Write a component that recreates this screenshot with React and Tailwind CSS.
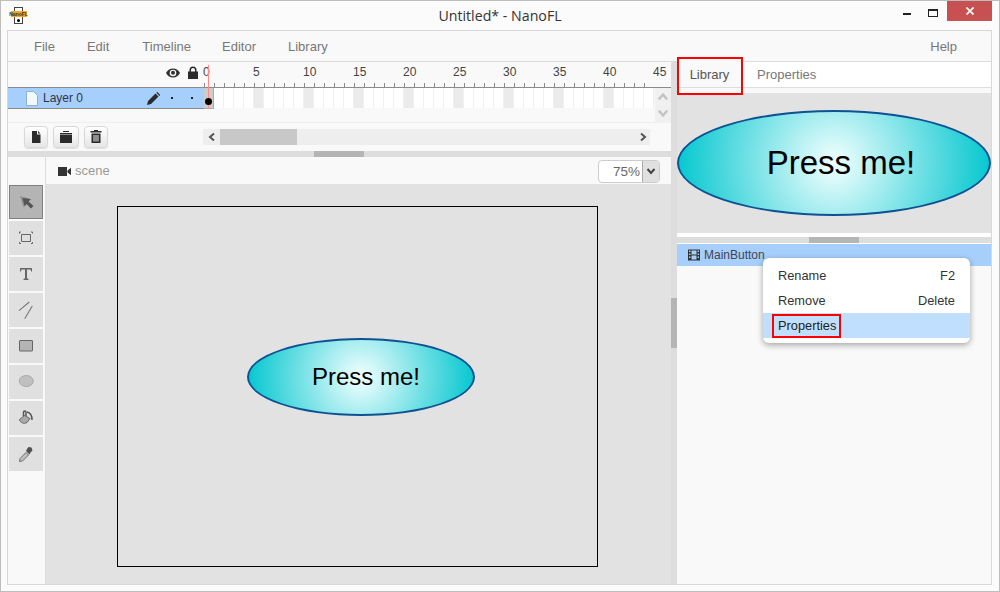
import React from "react";

const ARIAL = "font-['Liberation_Sans',Arial,sans-serif]";

const Ellipse = ({ className, textClass }) => (
  <div className={`flex items-center justify-center rounded-[50%] border-2 border-[#0f5293] bg-[radial-gradient(circle_farthest-side,#f4ffff,#08c8d0)] ${className}`}>
    <span className={`text-black ${textClass}`}>Press me!</span>
  </div>
);

const Tool = ({ active, children }) => (
  <div className={`flex h-[34px] w-[34px] items-center justify-center ${active ? "border border-[#808080] bg-[#b4b4b4]" : "bg-[#e0e0e0]"}`}>
    <svg width="22" height="22" viewBox="0 0 22 22">{children}</svg>
  </div>
);

const SmallBtn = ({ w, children }) => (
  <div className={`flex h-[22px] items-center justify-center rounded-[4px] border border-[#d8d8d8] bg-gradient-to-b from-white to-[#e6e6e6] shadow-[0_1px_1px_rgba(0,0,0,0.1)] ${w}`}>
    <svg width="14" height="14" viewBox="0 0 14 14" fill="#2b2b2b">{children}</svg>
  </div>
);

const Chevron = ({ dir, color = "#555", size = 10 }) => {
  const d = {
    left: "M7 1.5 3 5l4 3.5",
    right: "M3 1.5 7 5 3 8.5",
    up: "M1.5 7 5 3l3.5 4",
    down: "M1.5 3 5 7l3.5-4",
  }[dir];
  return (
    <svg width={size} height={size} viewBox="0 0 10 10" fill="none" stroke={color} strokeWidth="2">
      <path d={d} />
    </svg>
  );
};

const labels = [0, 5, 10, 15, 20, 25, 30, 35, 40, 45];
const ticks = Array.from({ length: 45 }, (_, i) => i);

export default function App() {
  return (
    <div className={`flex h-[592px] w-[1000px] flex-col overflow-hidden border border-[#bdbdbd] bg-[#fbfbfb] ${ARIAL}`}>
      {/* Title bar */}
      <div className="relative flex h-[29px] shrink-0 items-center justify-center">
        <div className="absolute left-[9px] top-[6px] flex h-[17px] w-[17px] flex-col items-center">
          <div className="h-[4px] w-[9px] border border-b-0 border-[#444] bg-white" />
          <div className="flex h-[6px] w-[16px] items-center justify-center bg-[#f0a828] text-[5px] font-bold leading-none text-[#333]">NanoFL</div>
          <div className="flex h-[7px] w-[9px] items-center justify-center border border-t-0 border-[#444] bg-white">
            <div className="h-[3px] w-[3px] rounded-full bg-black" />
          </div>
        </div>
        <span className="font-['Open_Sans',sans-serif] text-[14.200px] text-[#333]">Untitled* - NanoFL</span>
        <div className="absolute right-[7px] top-[0px] flex h-[20px] items-start">
          <div className="mr-[17px] mt-[12px] h-[2px] w-[8px] bg-[#222]" />
          <div className="mr-[9px] mt-[8px] h-[8px] w-[10px] border border-t-2 border-[#222]" />
          <div className="flex h-[20px] w-[45px] items-center justify-center bg-[#c75050]">
            <svg width="8" height="8" viewBox="0 0 8 8" stroke="#fff" strokeWidth="1.7"><path d="M.5.5l7 7M7.5.5l-7 7" /></svg>
          </div>
        </div>
      </div>

      {/* Frame */}
      <div className="ml-[6px] mr-[7px] mb-[6px] flex min-h-0 flex-1 flex-col border border-[#d8d8d8] bg-[#f9f9f9]">
        {/* Menu */}
        <div className="flex h-[31px] shrink-0 items-center border-b border-[#dcdcdc] pt-[1px] text-[13px] text-[#777]">
          <span className="ml-[26px]">File</span>
          <span className="ml-[32px]">Edit</span>
          <span className="ml-[33px]">Timeline</span>
          <span className="ml-[31px]">Editor</span>
          <span className="ml-[32px]">Library</span>
          <span className="ml-auto mr-[34px]">Help</span>
        </div>

        <div className="flex min-h-0 flex-1">
          {/* Left column */}
          <div className="flex w-[663px] shrink-0 flex-col">
            {/* Timeline */}
            <div className="relative flex h-[89px] shrink-0 flex-col">
              <div className="flex h-[26px] shrink-0 border-b border-[#8a8a8a]">
                <div className="flex w-[196px] shrink-0 items-start justify-end pr-[5px] pt-[4px]">
                  <svg width="14" height="12" viewBox="0 0 14 12" className="mr-[7px] mt-[1px]" fill="#333">
                    <path d="M7 1.5C3.8 1.5 1.2 3.6 0 6c1.2 2.4 3.8 4.5 7 4.5s5.800-2.100 7-4.500C12.800 3.600 10.200 1.500 7 1.500zm0 7.800A3.300 3.300 0 1 1 7 2.700a3.300 3.300 0 0 1 0 6.600z" />
                    <circle cx="7" cy="5.700" r="2" />
                  </svg>
                  <svg width="12" height="13" viewBox="0 0 12 13" fill="#2b2b2b">
                    <path d="M2.500 5.500V4a3.500 3.500 0 0 1 7 0v1.500H11V13H1V5.500zM4 5.500h4V4a2 2 0 0 0-4 0z" />
                  </svg>
                </div>
                <div className="relative flex-1">
                  <div className="-ml-[1px] flex text-[12px] leading-[20px] text-[#444]">
                    {labels.map((n) => (
                      <span key={n} className="w-[50px] shrink-0">{n}</span>
                    ))}
                  </div>
                  <div className="absolute bottom-0 left-0 flex">
                    {ticks.map((i) => (
                      <div key={i} className="h-[4px] w-[10px] border-l border-[#8a8a8a]" />
                    ))}
                  </div>
                </div>
              </div>

              <div className="flex h-[35px] shrink-0">
                <div className="flex w-[647px] shrink-0 flex-col">
                  <div className="flex h-[21px] shrink-0">
                    <div className="flex w-[196px] shrink-0 items-center border-b border-[#8a8a8a] bg-[#a6cffb] text-[12px] text-[#334]">
                      <svg width="12" height="15" viewBox="0 0 12 15" className="ml-[18px]">
                        <path d="M.5.500h7l4 4v10H.500z" fill="#f4f8fc" stroke="#8fb2d2" />
                      </svg>
                      <span className="ml-[5px]">Layer 0</span>
                      <svg width="13" height="13" viewBox="0 0 13 13" className="ml-[64px]" fill="#2b2b2b">
                        <path d="M0 13l1-4 7.500-7.500 3 3L4 12zM9.300.7l1-.7 3 3-.8 1z" />
                      </svg>
                      <div className="ml-[11px] h-[2px] w-[2px] bg-[#222]" />
                      <div className="ml-[18px] h-[2px] w-[2px] bg-[#222]" />
                    </div>
                    <div className="flex h-[21px] flex-1">
                      <div className="w-[10px] shrink-0 border-r border-b border-[#aaa] bg-[#cccccc]" />
                      {ticks.slice(1).map((i) => (
                        <div key={i} className={`h-[20px] w-[10px] shrink-0 border-r border-[#f0f0f0] ${i % 5 === 0 ? "bg-[#ebebeb]" : "bg-white"}`} />
                      ))}
                    </div>
                  </div>
                  <div className="flex-1 border-b border-[#eeeeee]" />
                </div>
                <div className="flex w-[16px] shrink-0 flex-col items-center gap-[4px] bg-[#f0f0f0] pt-[3px]">
                  <Chevron dir="up" color="#c4c4c4" size={12} />
                  <Chevron dir="down" color="#c4c4c4" size={12} />
                </div>
              </div>

              <div className="flex flex-1 items-center pl-[16px]">
                <SmallBtn w="w-[24px]"><path d="M3 1h5v3.500h3.500V13H3zM9 1l2.500 2.500H9z" /></SmallBtn>
                <div className="w-[5px]" />
                <SmallBtn w="w-[26px]"><path d="M4 1h6v1H4zM1 3h12v1.500H1zM1 5h12v8H1z" /></SmallBtn>
                <div className="w-[5px]" />
                <SmallBtn w="w-[24px]"><path d="M5 0h4v1h3.500v1.500h-11V1H5zM2.500 3.500h9V13h-9zM4.500 5v6.500h1V5zm2 0v6.500h1V5zm2 0v6.500h1V5z" fillRule="evenodd" /></SmallBtn>
                <div className="ml-[95px] flex h-[16px] w-[447px] items-center bg-[#eeeeee]">
                  <div className="flex w-[17px] justify-center"><Chevron dir="left" /></div>
                  <div className="h-[16px] w-[77px] bg-[#c8c8c8]" />
                  <div className="ml-auto mr-[2px] flex w-[10px] justify-center"><Chevron dir="right" /></div>
                </div>
              </div>

              <div className="absolute left-[200px] top-[3px] h-[43px] w-px bg-[#ff8a8a]" />
              <div className="absolute left-[197px] top-[36px] h-[7px] w-[7px] rounded-full bg-black" />
            </div>

            {/* Horizontal splitter */}
            <div className="flex h-[6px] shrink-0 justify-center bg-[#dddddd] pr-[1px]">
              <div className="h-[6px] w-[50px] bg-[#b5b5b5]" />
            </div>

            {/* Editor */}
            <div className="flex min-h-0 flex-1">
              <div className="flex w-[38px] shrink-0 flex-col gap-[2px] border-r border-[#dddddd] pl-[1px] pt-[28px]">
                <Tool active>
                  <path d="M5 5l9 2.500-5.500 9z" fill="#909090" />
                  <path d="M7.500 7l8.500 1-2.500 2.500 5 4.500-2.500 2.500-4.500-4.500-1.800 2.500z" fill="#555" />
                </Tool>
                <Tool>
                  <path d="M6.500 7.500h9v7h-9z" fill="none" stroke="#666" strokeWidth="1" />
                  <path d="M4.500 6.500v-1.500h1.500M16 5h1.500v1.500M4.500 15v1.500h1.500M16 16.500h1.500v-1.500" fill="none" stroke="#666" />
                </Tool>
                <Tool>
                  <path d="M5 5h12v3.500h-.8L15.500 6.500H12v8.800l1.500.7v1H8.500v-1l1.500-.7V6.500H6.500L5.800 8.500H5z" fill="#666" />
                </Tool>
                <Tool>
                  <path d="M4 11.700L14.300 3M9.700 19.700L17.300 7" stroke="#777" strokeWidth="1.100" fill="none" />
                </Tool>
                <Tool>
                  <rect x="4.500" y="5.500" width="13" height="10.500" rx="0.500" fill="#b4b4b4" stroke="#666" />
                </Tool>
                <Tool>
                  <ellipse cx="11.300" cy="10" rx="7" ry="5.500" fill="#c0c0c0" stroke="#aaaaaa" />
                </Tool>
                <Tool>
                  <path d="M4.500 12.500l5-4 5.500 3-3 4c-3 2-7 0-7.500-3z" fill="#aaaaaa" stroke="#666" />
                  <path d="M8.500 9V5.500c0-2 2.500-2 2.500 0V9M12 5c3 .5 5 3 5 8" fill="none" stroke="#555" strokeWidth="1.500" />
                </Tool>
                <Tool>
                  <path d="M4.500 18.500l.5-3 6-6 2.500 2.500-6 6z" fill="#c0c0c0" stroke="#707070" />
                  <path d="M11 8l3.500 3.500 1-2 2-2-1-3-3-.5-1.500 2z" fill="#505050" />
                </Tool>
              </div>

              <div className="flex min-w-0 flex-1 flex-col">
                <div className="flex h-[27px] shrink-0 items-center pt-[1px]">
                  <svg width="13" height="9" viewBox="0 0 13 9" className="ml-[12px]" fill="#333">
                    <path d="M0 0h9v9H0zM9.500 3.500L13 .8v7.400L9.500 5.500z" />
                  </svg>
                  <span className="ml-[4px] text-[13px] text-[#999]">scene</span>
                  <div className="ml-auto mr-[11px] flex h-[23px] w-[62px] overflow-hidden rounded-[4px] border border-[#cccccc] bg-white">
                    <span className="flex-1 pr-[2px] text-right text-[13.500px] leading-[21px] text-[#666]">75%</span>
                    <div className="flex w-[17px] items-center justify-center border-l border-[#aaa] bg-[#e0e0e0]">
                      <Chevron dir="down" color="#444" />
                    </div>
                  </div>
                </div>
                <div className="min-h-0 flex-1 bg-[#e2e2e2] pl-[71px] pt-[22px]">
                  <div className="flex h-[361px] w-[481px] items-start border border-black pl-[129px] pt-[131px]">
                    <Ellipse className="h-[78px] w-[228px] pl-[10px]" textClass="text-[24px]" />
                  </div>
                </div>
              </div>
            </div>
          </div>

          {/* Vertical splitter */}
          <div className="flex w-[6px] shrink-0 items-center bg-[#dddddd]">
            <div className="h-[50px] w-[6px] bg-[#b5b5b5]" />
          </div>

          {/* Right column */}
          <div className="relative flex min-w-0 flex-1 flex-col">
            <div className="flex h-[26px] shrink-0 items-end border-b border-[#dddddd] bg-white text-[13px]">
              <div className="flex h-[26px] w-[65px] items-center justify-center rounded-t-[3px] bg-[#f9f9f9] pt-[2px] text-[#555]">Library</div>
              <span className="ml-[15px] pb-[3px] text-[#777]">Properties</span>
            </div>
            <div className="absolute left-0 top-[-5px] h-[38px] w-[66px] border-2 border-[#ff0000]" />

            <div className="h-[5px] shrink-0" />
            <div className="flex h-[140px] shrink-0 items-center bg-[#e2e2e2]">
              <Ellipse className="h-[106px] w-[315px] pl-[14px]" textClass="text-[33px]" />
            </div>
            <div className="h-[4px] shrink-0 bg-white" />
            <div className="flex h-[6px] shrink-0 justify-center bg-[#dddddd]">
              <div className="h-[6px] w-[50px] bg-[#b5b5b5]" />
            </div>
            <div className="h-px shrink-0 bg-white" />

            <div className="relative flex h-[22px] shrink-0 items-center bg-[#a6cffb] text-[12px] text-[#445]">
              <svg width="12" height="12" viewBox="0 0 12 12" className="ml-[11px]" fill="#333">
                <path fillRule="evenodd" d="M0 .5h12v11H0zM1 1.500v1.500h1.500V1.500zm0 3v1.500h1.500V4.500zm0 3V9h1.500V7.500zM9.500 1.500V3H11V1.500zm0 3V6H11V4.500zm0 3V9H11V7.500zM3.500 1.500v4h5v-4zm0 5v4h5v-4z" />
              </svg>
              <span className="ml-[4px]">MainButton</span>

              <div className="absolute left-[86px] top-[14px] z-10 flex h-[85px] w-[207px] flex-col rounded-[6px] bg-white py-[5px] text-[12.800px] text-[#333] shadow-[0_2px_6px_rgba(0,0,0,0.35)]">
                <div className="flex h-[25px] items-center justify-between px-[15px] pt-[1px]">
                  <span>Rename</span>
                  <span>F2</span>
                </div>
                <div className="flex h-[25px] items-center justify-between px-[15px] pt-[1px]">
                  <span>Remove</span>
                  <span>Delete</span>
                </div>
                <div className="relative flex h-[25px] items-center bg-[#c0dfff] px-[15px] pt-[1px] text-[#222]">
                  <span>Properties</span>
                  <div className="absolute left-[9px] top-[1px] h-[24px] w-[69px] border-2 border-[#ff0000]" />
                </div>
              </div>
            </div>
            <div className="flex-1" />
          </div>
        </div>
      </div>
    </div>
  );
}
